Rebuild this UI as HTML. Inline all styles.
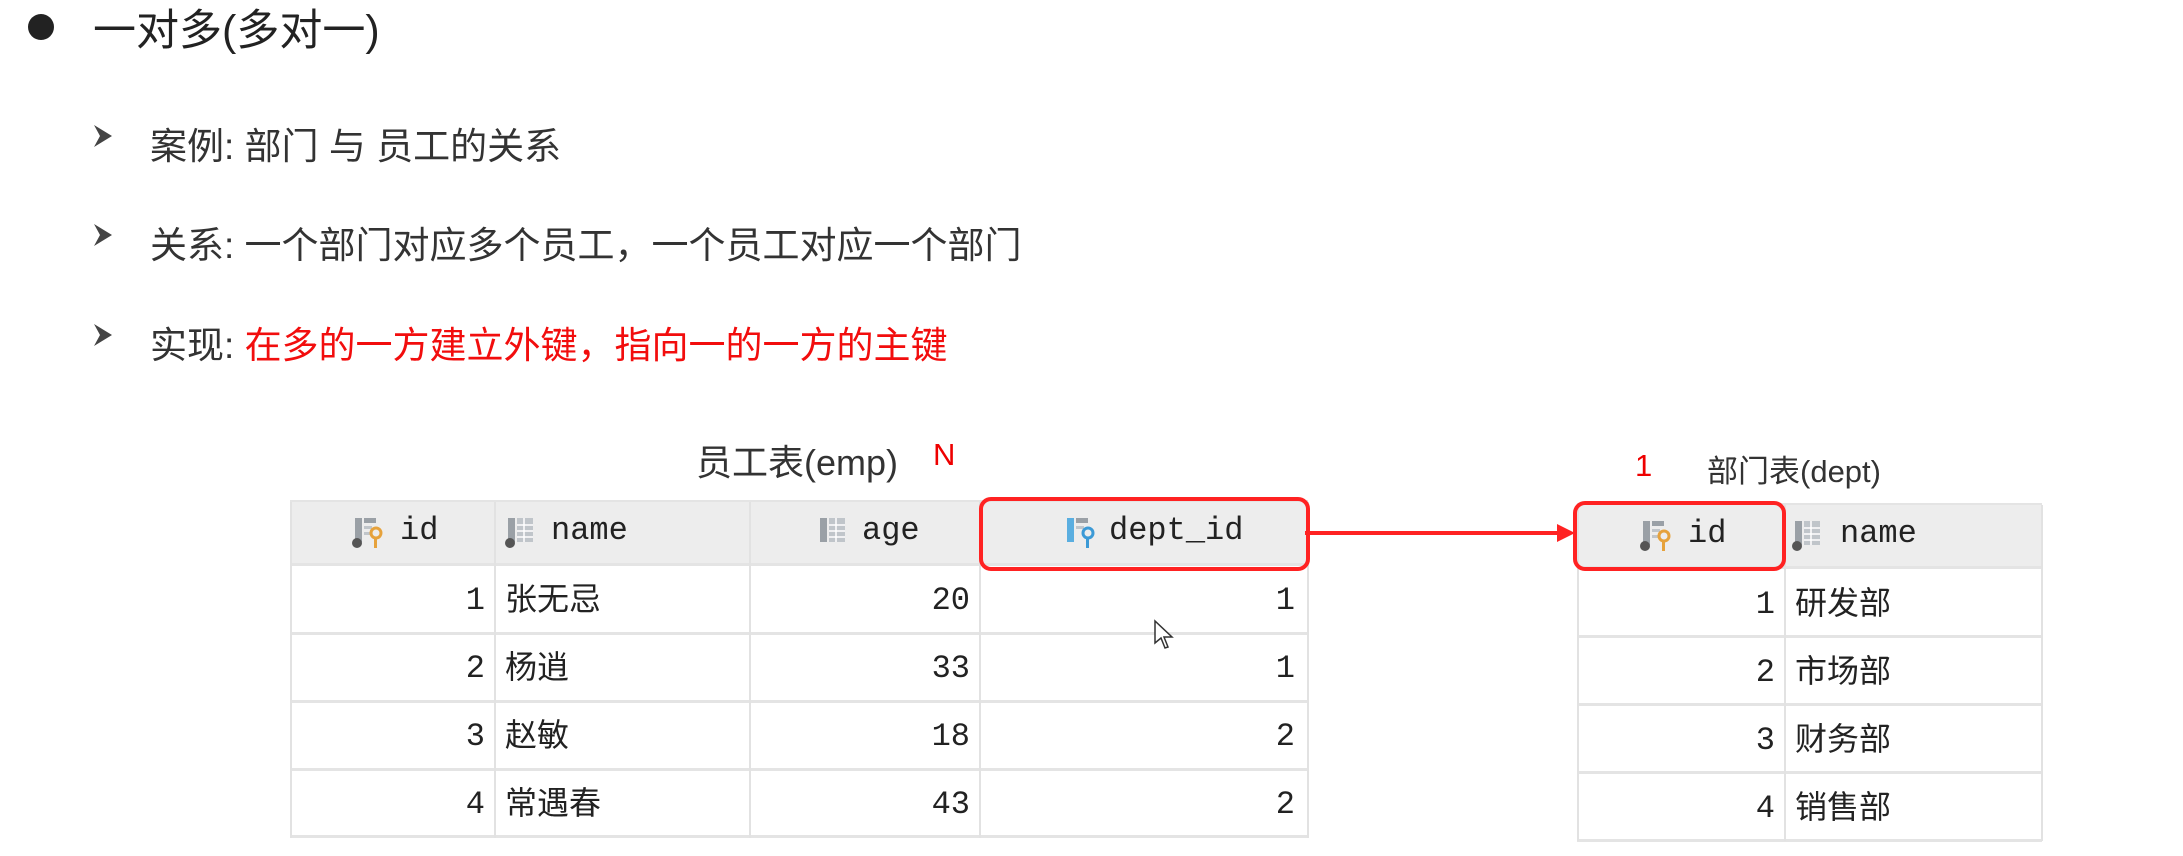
<!DOCTYPE html>
<html><head><meta charset="utf-8"><style>
body{margin:0;width:2183px;height:856px;background:#fff;position:relative;overflow:hidden;font-family:"Liberation Sans","Noto Sans CJK SC",sans-serif;}
.a{position:absolute;white-space:nowrap;}
.t{color:#333;font-size:37px;}
.hdr{position:absolute;background:#ededed;}
.mono{font-family:"Liberation Mono","Noto Sans CJK SC",monospace;color:#222;font-size:32px;}
.cell{position:absolute;font-family:"Liberation Mono","Noto Sans CJK SC",monospace;font-size:32px;color:#222;line-height:40px;}
.vl{position:absolute;width:2px;background:#e2e2e2;}
.hl{position:absolute;height:3px;background:#e4e4e4;}
</style></head><body>
<div class="a" style="left:28px;top:14px;width:26px;height:26px;border-radius:50%;background:#222;"></div>
<div class="a" style="left:93px;top:-4px;font-size:43px;color:#222">一对多(多对一)</div>

<svg class="a" style="left:92px;top:123px" width="22" height="26"><path d="M2 2 L20 13 L2 24 L8 13Z" fill="#444"/></svg>
<div class="a t" style="left:150px;top:116px">案例: 部门 与 员工的关系</div>
<svg class="a" style="left:92px;top:222px" width="22" height="26"><path d="M2 2 L20 13 L2 24 L8 13Z" fill="#444"/></svg>
<div class="a t" style="left:150px;top:215px">关系: 一个部门对应多个员工，一个员工对应一个部门</div>
<svg class="a" style="left:92px;top:322px" width="22" height="26"><path d="M2 2 L20 13 L2 24 L8 13Z" fill="#444"/></svg>
<div class="a t" style="left:150px;top:315px">实现: <span style="color:#f20d0d">在多的一方建立外键，指向一的一方的主键</span></div>

<div class="a" style="left:696px;top:434px;font-size:36px;color:#333">员工表(emp)</div>
<div class="a" style="left:933px;top:437px;font-size:31px;color:#e00">N</div>
<div class="a" style="left:1635px;top:448px;font-size:31px;color:#e00">1</div>
<div class="a" style="left:1707px;top:446px;font-size:31px;color:#333">部门表(dept)</div>

<!-- emp table -->
<div class="hdr" style="left:290px;top:502px;width:1018px;height:62px"></div>
<div class="hl" style="left:290px;top:500px;width:1018px;height:2px"></div>
<div class="hl" style="left:290px;top:563px;width:1018px"></div>
<div class="hl" style="left:290px;top:632px;width:1018px"></div>
<div class="hl" style="left:290px;top:700px;width:1018px"></div>
<div class="hl" style="left:290px;top:768px;width:1018px"></div>
<div class="hl" style="left:290px;top:835px;width:1018px"></div>
<div class="vl" style="left:290px;top:502px;height:336px"></div>
<div class="vl" style="left:494px;top:502px;height:336px"></div>
<div class="vl" style="left:749px;top:502px;height:336px"></div>
<div class="vl" style="left:979px;top:502px;height:336px"></div>
<div class="vl" style="left:1307px;top:502px;height:336px"></div>

<svg class="a" style="left:352px;top:516px" width="32" height="34"><rect x="3" y="2" width="7" height="24" fill="#9aa0a6"/><rect x="12" y="2" width="12" height="5" fill="#9aa0a6"/><rect x="12" y="10" width="8" height="3" fill="#c0c5ca"/><rect x="12" y="16" width="8" height="3" fill="#c0c5ca"/><circle cx="5" cy="27" r="5" fill="#555"/><circle cx="24" cy="17" r="5" fill="none" stroke="#e6a23c" stroke-width="3"/><rect x="22" y="21" width="3" height="11" fill="#e6a23c"/></svg>
<div class="a mono" style="left:400px;top:512px">id</div>
<svg class="a" style="left:505px;top:516px" width="32" height="34"><rect x="3" y="2" width="7" height="24" fill="#9aa0a6"/><rect x="12" y="2" width="16" height="24" fill="#c0c5ca"/><path d="M12 9H28M12 15H28M12 21H28M19 2V26" stroke="#fff" stroke-width="1.5"/><circle cx="5" cy="27" r="5" fill="#555"/></svg>
<div class="a mono" style="left:551px;top:512px">name</div>
<svg class="a" style="left:817px;top:516px" width="32" height="34"><rect x="3" y="2" width="7" height="24" fill="#9aa0a6"/><rect x="12" y="2" width="16" height="24" fill="#c0c5ca"/><path d="M12 9H28M12 15H28M12 21H28M19 2V26" stroke="#fff" stroke-width="1.5"/></svg>
<div class="a mono" style="left:862px;top:512px">age</div>
<svg class="a" style="left:1064px;top:516px" width="32" height="34"><rect x="3" y="2" width="7" height="24" fill="#5aaee0"/><rect x="12" y="2" width="12" height="5" fill="#9aa0a6"/><rect x="12" y="10" width="8" height="3" fill="#c0c5ca"/><circle cx="24" cy="17" r="5" fill="none" stroke="#3c9ad6" stroke-width="3"/><rect x="22" y="21" width="3" height="11" fill="#3c9ad6"/></svg>
<div class="a mono" style="left:1109px;top:512px">dept_id</div>

<div class="cell" style="left:300px;width:185px;text-align:right;top:581px">1</div>
<div class="cell" style="left:505px;top:582px">张无忌</div>
<div class="cell" style="left:760px;width:210px;text-align:right;top:581px">20</div>
<div class="cell" style="left:990px;width:305px;text-align:right;top:581px">1</div>
<div class="cell" style="left:300px;width:185px;text-align:right;top:649px">2</div>
<div class="cell" style="left:505px;top:650px">杨逍</div>
<div class="cell" style="left:760px;width:210px;text-align:right;top:649px">33</div>
<div class="cell" style="left:990px;width:305px;text-align:right;top:649px">1</div>
<div class="cell" style="left:300px;width:185px;text-align:right;top:717px">3</div>
<div class="cell" style="left:505px;top:718px">赵敏</div>
<div class="cell" style="left:760px;width:210px;text-align:right;top:717px">18</div>
<div class="cell" style="left:990px;width:305px;text-align:right;top:717px">2</div>
<div class="cell" style="left:300px;width:185px;text-align:right;top:785px">4</div>
<div class="cell" style="left:505px;top:786px">常遇春</div>
<div class="cell" style="left:760px;width:210px;text-align:right;top:785px">43</div>
<div class="cell" style="left:990px;width:305px;text-align:right;top:785px">2</div>

<!-- dept table -->
<div class="hdr" style="left:1577px;top:505px;width:465px;height:62px"></div>
<div class="hl" style="left:1577px;top:503px;width:465px;height:2px"></div>
<div class="hl" style="left:1577px;top:566px;width:465px"></div>
<div class="hl" style="left:1577px;top:635px;width:465px"></div>
<div class="hl" style="left:1577px;top:703px;width:465px"></div>
<div class="hl" style="left:1577px;top:771px;width:465px"></div>
<div class="hl" style="left:1577px;top:839px;width:465px"></div>
<div class="vl" style="left:1577px;top:505px;height:336px"></div>
<div class="vl" style="left:1784px;top:505px;height:336px"></div>
<div class="vl" style="left:2041px;top:505px;height:336px"></div>

<svg class="a" style="left:1640px;top:519px" width="32" height="34"><rect x="3" y="2" width="7" height="24" fill="#9aa0a6"/><rect x="12" y="2" width="12" height="5" fill="#9aa0a6"/><rect x="12" y="10" width="8" height="3" fill="#c0c5ca"/><rect x="12" y="16" width="8" height="3" fill="#c0c5ca"/><circle cx="5" cy="27" r="5" fill="#555"/><circle cx="24" cy="17" r="5" fill="none" stroke="#e6a23c" stroke-width="3"/><rect x="22" y="21" width="3" height="11" fill="#e6a23c"/></svg>
<div class="a mono" style="left:1688px;top:515px">id</div>
<svg class="a" style="left:1792px;top:519px" width="32" height="34"><rect x="3" y="2" width="7" height="24" fill="#9aa0a6"/><rect x="12" y="2" width="16" height="24" fill="#c0c5ca"/><path d="M12 9H28M12 15H28M12 21H28M19 2V26" stroke="#fff" stroke-width="1.5"/><circle cx="5" cy="27" r="5" fill="#555"/></svg>
<div class="a mono" style="left:1840px;top:515px">name</div>

<div class="cell" style="left:1590px;width:185px;text-align:right;top:585px">1</div>
<div class="cell" style="left:1795px;top:586px">研发部</div>
<div class="cell" style="left:1590px;width:185px;text-align:right;top:653px">2</div>
<div class="cell" style="left:1795px;top:654px">市场部</div>
<div class="cell" style="left:1590px;width:185px;text-align:right;top:721px">3</div>
<div class="cell" style="left:1795px;top:722px">财务部</div>
<div class="cell" style="left:1590px;width:185px;text-align:right;top:789px">4</div>
<div class="cell" style="left:1795px;top:790px">销售部</div>

<!-- red boxes & arrow -->
<div class="a" style="left:979px;top:497px;width:323px;height:66px;border:4px solid #f22;border-radius:12px"></div>
<div class="a" style="left:1573px;top:501px;width:205px;height:62px;border:4px solid #f22;border-radius:12px"></div>
<svg class="a" style="left:1305px;top:520px" width="272" height="26"><path d="M0 13H255" stroke="#f22" stroke-width="4"/><path d="M252 4L270 13L252 22Z" fill="#f22"/></svg>

<svg class="a" style="left:1153px;top:619px" width="22" height="32"><path d="M2 2V24L8 19L12 29L15 28L11 18L19 18Z" fill="#fff" stroke="#333" stroke-width="1.5"/></svg>
</body></html>
